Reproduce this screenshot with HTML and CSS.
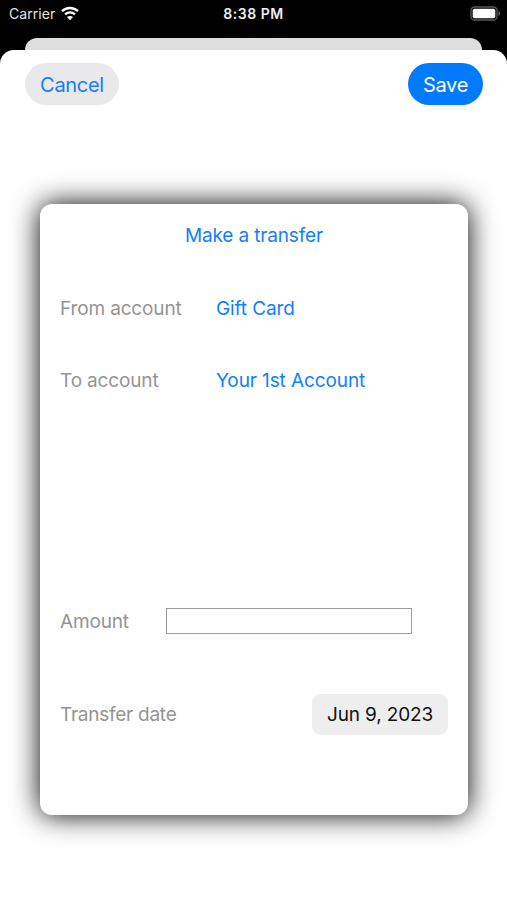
FILE: index.html
```html
<!DOCTYPE html>
<html lang="en">
<head>
    <meta charset="UTF-8">
    <title>Make a transfer</title>
    <link rel="stylesheet" href="styles.css">
</head>
<body>

    <header class="status-bar">
        <div class="carrier">
            <span>Carrier</span>
            <svg class="wifi" width="20" height="15" viewBox="0 0 20 15">
                <path d="M2 5.2C6.5 .9 13.5 .9 18 5.2M5.1 8.4C7.9 5.8 12.1 5.8 14.9 8.4" fill="none" stroke="#fff" stroke-width="2.3"/>
                <path d="M10 14.2L7 11.1C8.6 9.6 11.4 9.6 13 11.1Z" fill="#fff"/>
            </svg>
        </div>
        <div class="time">8:38 PM</div>
        <svg class="battery" width="31" height="15" viewBox="0 0 31 15">
            <rect x="1" y="1" width="26" height="13" rx="3.5" fill="none" stroke="#59595b" stroke-width="1.3"/>
            <rect x="2.7" y="2.7" width="22.6" height="9.6" rx="1.8" fill="#fff"/>
            <path d="M28.5 5V10C30.5 9.2 30.5 5.8 28.5 5Z" fill="#69696b"/>
        </svg>
    </header>

    <div class="back-sheet"></div>

    <main class="sheet">
        <div class="toolbar">
            <button class="btn cancel">Cancel</button>
            <button class="btn save">Save</button>
        </div>

        <section class="card">
            <h1>Make a transfer</h1>
            <div class="row from">
                <span class="label">From account</span>
                <a class="value">Gift Card</a>
            </div>
            <div class="row to">
                <span class="label">To account</span>
                <a class="value">Your 1st Account</a>
            </div>
            <div class="row amount">
                <label class="label" for="amount">Amount</label>
                <input type="text" id="amount">
            </div>
            <div class="row date">
                <span class="label">Transfer date</span>
                <button class="date-btn">Jun 9, 2023</button>
            </div>
        </section>
    </main>

</body>
</html>
```
FILE: styles.css
```css
* {
    box-sizing: border-box;
}

body {
    margin: 0;
    height: 900px;
    overflow: hidden;
    background-color: #000;
    font-family: Inter, Roboto, sans-serif;
    font-size: 19px;
}

button {
    border: none;
    font-family: inherit;
    padding: 0;
}

.status-bar {
    display: grid;
    grid-template-columns: 1fr auto 1fr;
    align-items: center;
    height: 38px;
    padding: 0 6px 11px 9px;
    color: #fff;
    font-size: 14px;
}

.carrier {
    display: flex;
    align-items: center;
    gap: 5px;
    color: #e4e4e4;
    letter-spacing: 0.05px;
}

.time {
    margin-left: -3px;
    font-weight: 600;
    font-size: 14px;
    letter-spacing: 0.55px;
    color: #eee;
}

.battery {
    justify-self: end;
}

.back-sheet {
    height: 12px;
    margin: 0 25px;
    border-radius: 12px 12px 0 0;
    background-color: #dedede;
}

.sheet {
    height: 850px;
    padding-top: 13px;
    border-radius: 14px 14px 0 0;
    background-color: #fff;
}

.toolbar {
    display: flex;
    justify-content: space-between;
    padding: 0 24px 0 25px;
}

.btn {
    height: 42px;
    padding-top: 1px;
    border-radius: 21px;
    font-size: 20px;
    letter-spacing: -0.3px;
}

.cancel {
    width: 94px;
    background-color: #e9e9eb;
    color: #147efb;
}

.save {
    width: 75px;
    background-color: #007aff;
    color: #fff;
}

.card {
    height: 611px;
    margin: 99px 39px 0 40px;
    padding: 20px 20px 0;
    border-radius: 12px;
    background-color: #fff;
    box-shadow: 0 0 28px #000;
    letter-spacing: -0.15px;
}

h1 {
    margin: 0;
    line-height: 24px;
    text-align: center;
    font-size: 19px;
    font-weight: 400;
    color: #147efb;
}

.row {
    display: flex;
    align-items: center;
    height: 40px;
}

.label {
    color: #949494;
}

.value {
    color: #147efb;
    letter-spacing: -0.1px;
}

.from {
    margin-top: 40px;
}

.to {
    margin-top: 32px;
}

.from .label,
.to .label {
    width: 156px;
}

.amount {
    margin-top: 201px;
}

.amount .label {
    width: 106px;
}

#amount {
    width: 246px;
    height: 26px;
    border: 1.5px solid #9c9c9c;
    border-radius: 0;
    outline: none;
}

.date {
    margin-top: 53px;
    justify-content: space-between;
}

.date .label {
    letter-spacing: -0.25px;
}

.date-btn {
    width: 136px;
    height: 41px;
    border-radius: 9px;
    background-color: #eee;
    color: #111;
    font-size: 19px;
    letter-spacing: -0.15px;
}
```
